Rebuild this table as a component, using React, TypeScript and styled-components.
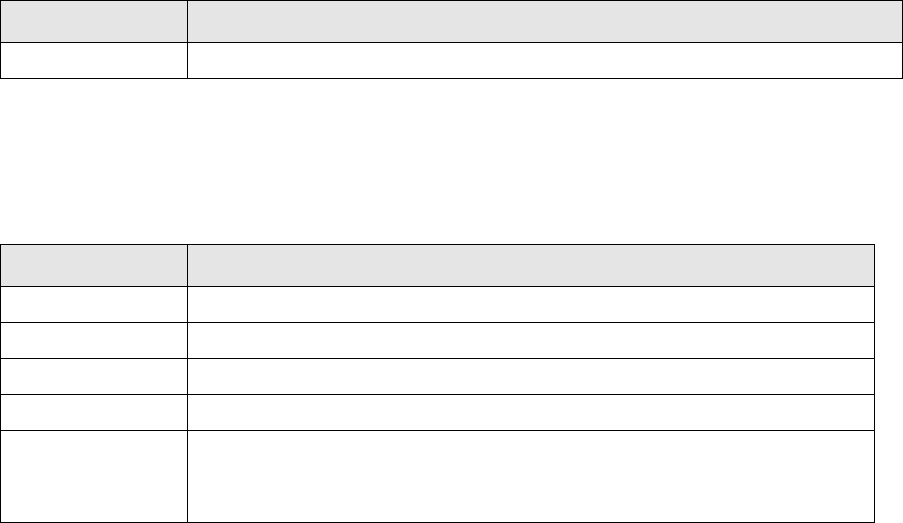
import styled, { createGlobalStyle } from "styled-components"

const GlobalStyle = createGlobalStyle`
  html, body {
    margin: 0;
    padding: 0;
    background: #ffffff;
  }

  body {
    font-family: "Liberation Sans", Arial, sans-serif;
    font-size: 13px;
    color: #000000;
  }
`

const Page = styled.div`
  display: flex;
  flex-direction: column;
  align-items: flex-start;
  gap: 165px;
`

const Table = styled.table<{ $width: number }>`
  width: ${({ $width }) => $width}px;
  border-collapse: collapse;
  table-layout: fixed;

  col.label {
    width: 187px;
  }
`

const Row = styled.tr<{ $height: number }>`
  height: ${({ $height }) => $height}px;
`

const HeadCell = styled.th`
  padding: 0 6px;
  border: 1px solid #000000;
  background: #e5e5e5;
  font-weight: 700;
  text-align: left;
`

const Cell = styled.td`
  padding: 0 6px;
  border: 1px solid #000000;
  background: #ffffff;
  vertical-align: top;
`

const bodyRows = [36, 36, 36, 36, 92]

export default function App() {
  return (
    <>
      <GlobalStyle />
      <Page>
        <Table $width={903}>
          <colgroup>
            <col className="label" />
            <col />
          </colgroup>
          <thead>
            <Row $height={42}>
              <HeadCell />
              <HeadCell />
            </Row>
          </thead>
          <tbody>
            <Row $height={36}>
              <Cell />
              <Cell />
            </Row>
          </tbody>
        </Table>

        <Table $width={875}>
          <colgroup>
            <col className="label" />
            <col />
          </colgroup>
          <thead>
            <Row $height={42}>
              <HeadCell />
              <HeadCell />
            </Row>
          </thead>
          <tbody>
            {bodyRows.map((h, i) => (
              <Row key={i} $height={h}>
                <Cell />
                <Cell />
              </Row>
            ))}
          </tbody>
        </Table>
      </Page>
    </>
  )
}
